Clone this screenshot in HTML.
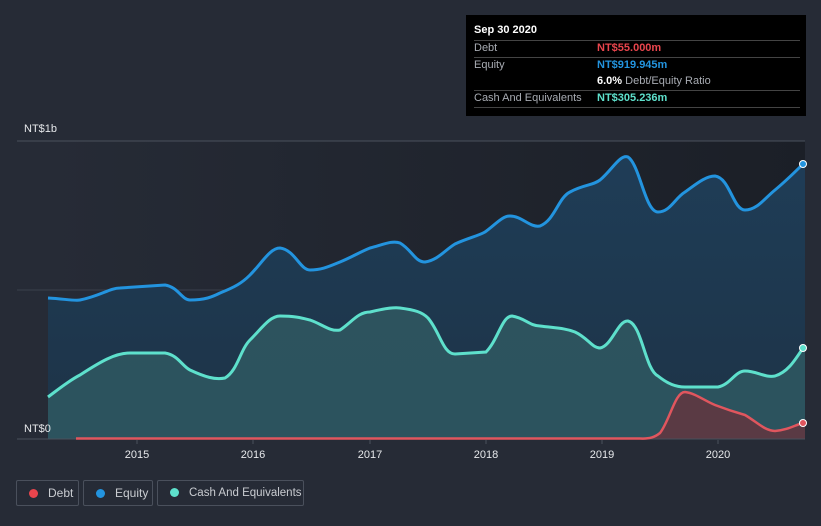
<!DOCTYPE html>
<html><head><meta charset="utf-8"><style>
body{margin:0;width:821px;height:526px;background:#262b36;font-family:"Liberation Sans",sans-serif;overflow:hidden;position:relative}
.tt{position:absolute;left:466px;top:15px;width:340px;height:101px;background:#000;color:#fff;font-size:11px}
.tt .r{position:absolute;left:8px;width:326px;border-top:1px solid #444}
.lg{position:absolute;top:480px;height:26px;border:1px solid #4a505c;border-radius:2px;color:#c9ccd1;font-size:12px;line-height:24px;box-sizing:border-box;white-space:nowrap;overflow:hidden}
.lg i{display:inline-block;width:9px;height:9px;border-radius:50%;margin:0 10px 0 12px;vertical-align:-1px}
</style></head><body>
<svg width="821" height="526" style="position:absolute;left:0;top:0">
<defs>
<linearGradient id="bg" x1="0" x2="1"><stop offset="0" stop-color="#262b36"/><stop offset="1" stop-color="#1b1f27"/></linearGradient>
<linearGradient id="eq" x1="0" y1="0" x2="0" y2="1"><stop offset="0" stop-color="#1f3d57"/><stop offset="1" stop-color="#1d3347"/></linearGradient>
</defs>
<rect x="48" y="141" width="757" height="298" fill="url(#bg)"/>
<line x1="17" y1="141" x2="805" y2="141" stroke="#4a505c"/>
<line x1="17" y1="290" x2="805" y2="290" stroke="#3a404c"/>
<path d="M48,298 C65,299 75,301 80,300 C100,296 110,288 120,288 L165,285 C178,287 182,300 190,300 C205,300 212,297 220,293 C235,287 242,283 250,275 C262,263 270,248 280,248 C295,250 300,270 310,270 C322,270 330,266 340,262 C352,257 360,252 370,248 C382,245 392,240 400,243 C412,250 415,262 425,262 C438,260 445,250 455,244 C468,238 478,236 485,232 C495,225 502,216 510,216 C522,216 530,228 540,226 C555,220 558,198 570,192 C585,184 592,186 600,180 C612,170 620,154 628,157 C640,165 645,212 658,212 C670,212 675,198 685,192 C695,185 705,176 715,176 C730,178 733,210 745,210 C757,210 765,198 775,190 C787,180 795,172 803,164 L805,164 L805,439 L48,439Z" fill="url(#eq)"/>
<path d="M48,397 C60,388 70,380 80,375 C100,362 115,353 130,353 L165,353 C178,355 182,366 190,370 C205,377 215,380 225,378 C238,370 240,350 250,340 C262,328 270,316 280,316 C295,316 302,318 310,320 C322,324 330,332 340,330 C352,322 358,312 370,312 C382,309 392,307 400,308 C415,310 422,312 428,318 C440,332 443,354 455,354 L486,352 C498,340 502,316 512,316 C525,318 530,326 540,326 C555,328 565,328 575,332 C588,338 592,348 600,348 C612,346 618,320 628,321 C642,324 645,370 658,376 C668,384 676,387 685,387 L718,387 C730,385 735,371 745,371 C757,371 765,378 775,376 C788,372 795,360 803,348 L805,348 L805,439 L48,439Z" fill="#2f5660" opacity="0.9"/>
<path d="M640,439 C650,439 655,437 660,433 C670,420 675,392 685,392 C695,393 705,401 715,405 C728,410 738,413 745,415 C757,422 765,431 775,431 C788,430 795,425 803,423 L805,423 L805,439Z" fill="#5a3a44"/>
<line x1="17" y1="439" x2="805" y2="439" stroke="#4a505c"/>
<path d="M48,298 C65,299 75,301 80,300 C100,296 110,288 120,288 L165,285 C178,287 182,300 190,300 C205,300 212,297 220,293 C235,287 242,283 250,275 C262,263 270,248 280,248 C295,250 300,270 310,270 C322,270 330,266 340,262 C352,257 360,252 370,248 C382,245 392,240 400,243 C412,250 415,262 425,262 C438,260 445,250 455,244 C468,238 478,236 485,232 C495,225 502,216 510,216 C522,216 530,228 540,226 C555,220 558,198 570,192 C585,184 592,186 600,180 C612,170 620,154 628,157 C640,165 645,212 658,212 C670,212 675,198 685,192 C695,185 705,176 715,176 C730,178 733,210 745,210 C757,210 765,198 775,190 C787,180 795,172 803,164" fill="none" stroke="#2394df" stroke-width="3"/>
<path d="M48,397 C60,388 70,380 80,375 C100,362 115,353 130,353 L165,353 C178,355 182,366 190,370 C205,377 215,380 225,378 C238,370 240,350 250,340 C262,328 270,316 280,316 C295,316 302,318 310,320 C322,324 330,332 340,330 C352,322 358,312 370,312 C382,309 392,307 400,308 C415,310 422,312 428,318 C440,332 443,354 455,354 L486,352 C498,340 502,316 512,316 C525,318 530,326 540,326 C555,328 565,328 575,332 C588,338 592,348 600,348 C612,346 618,320 628,321 C642,324 645,370 658,376 C668,384 676,387 685,387 L718,387 C730,385 735,371 745,371 C757,371 765,378 775,376 C788,372 795,360 803,348" fill="none" stroke="#5ee0cc" stroke-width="3"/>
<path d="M76,438.5 L640,438.5 C650,439 655,437 660,433 C670,420 675,392 685,392 C695,393 705,401 715,405 C728,410 738,413 745,415 C757,422 765,431 775,431 C788,430 795,425 803,423" fill="none" stroke="#e0565e" stroke-width="2.5"/>
<circle cx="803" cy="164" r="3.5" fill="#2394df" stroke="#fff" stroke-width="1"/>
<circle cx="803" cy="348" r="3.5" fill="#5ee0cc" stroke="#fff" stroke-width="1"/>
<circle cx="803" cy="423" r="3.5" fill="#e0565e" stroke="#fff" stroke-width="1"/>
<g stroke="#4a505c"><line x1="137" y1="440" x2="137" y2="444"/><line x1="253" y1="440" x2="253" y2="444"/><line x1="370" y1="440" x2="370" y2="444"/><line x1="486" y1="440" x2="486" y2="444"/><line x1="602" y1="440" x2="602" y2="444"/><line x1="718" y1="440" x2="718" y2="444"/></g>
<g fill="#e6e8eb" font-size="11" text-anchor="middle" font-family="Liberation Sans"><text x="137" y="458">2015</text><text x="253" y="458">2016</text><text x="370" y="458">2017</text><text x="486" y="458">2018</text><text x="602" y="458">2019</text><text x="718" y="458">2020</text></g>
<text x="24" y="132" fill="#e6e8eb" font-size="11">NT$1b</text>
<text x="24" y="432" fill="#e6e8eb" font-size="11">NT$0</text>
</svg>
<div class="tt">
<div style="position:absolute;left:8px;top:9px;font-weight:bold">Sep 30 2020</div>
<div class="r" style="top:25px"></div>
<div style="position:absolute;left:8px;top:27px;color:#a8acb3">Debt</div><div style="position:absolute;left:131px;top:27px;color:#e9454d;font-weight:bold">NT$55.000m</div>
<div class="r" style="top:42px"></div>
<div style="position:absolute;left:8px;top:44px;color:#a8acb3">Equity</div><div style="position:absolute;left:131px;top:44px;color:#2394df;font-weight:bold">NT$919.945m</div>
<div style="position:absolute;left:131px;top:60px;color:#a8acb3"><b style="color:#fff">6.0%</b> Debt/Equity Ratio</div>
<div class="r" style="top:75px"></div>
<div style="position:absolute;left:8px;top:77px;color:#a8acb3">Cash And Equivalents</div><div style="position:absolute;left:131px;top:77px;color:#5ee0cc;font-weight:bold">NT$305.236m</div>
<div class="r" style="top:92px"></div>
</div>
<div class="lg" style="left:16px;width:63px"><i style="background:#e9454d"></i>Debt</div>
<div class="lg" style="left:83px;width:70px"><i style="background:#2394df"></i>Equity</div>
<div class="lg" style="left:157px;width:147px;font-size:11.5px"><i style="background:#5ee0cc"></i>Cash And Equivalents</div>
</body></html>
